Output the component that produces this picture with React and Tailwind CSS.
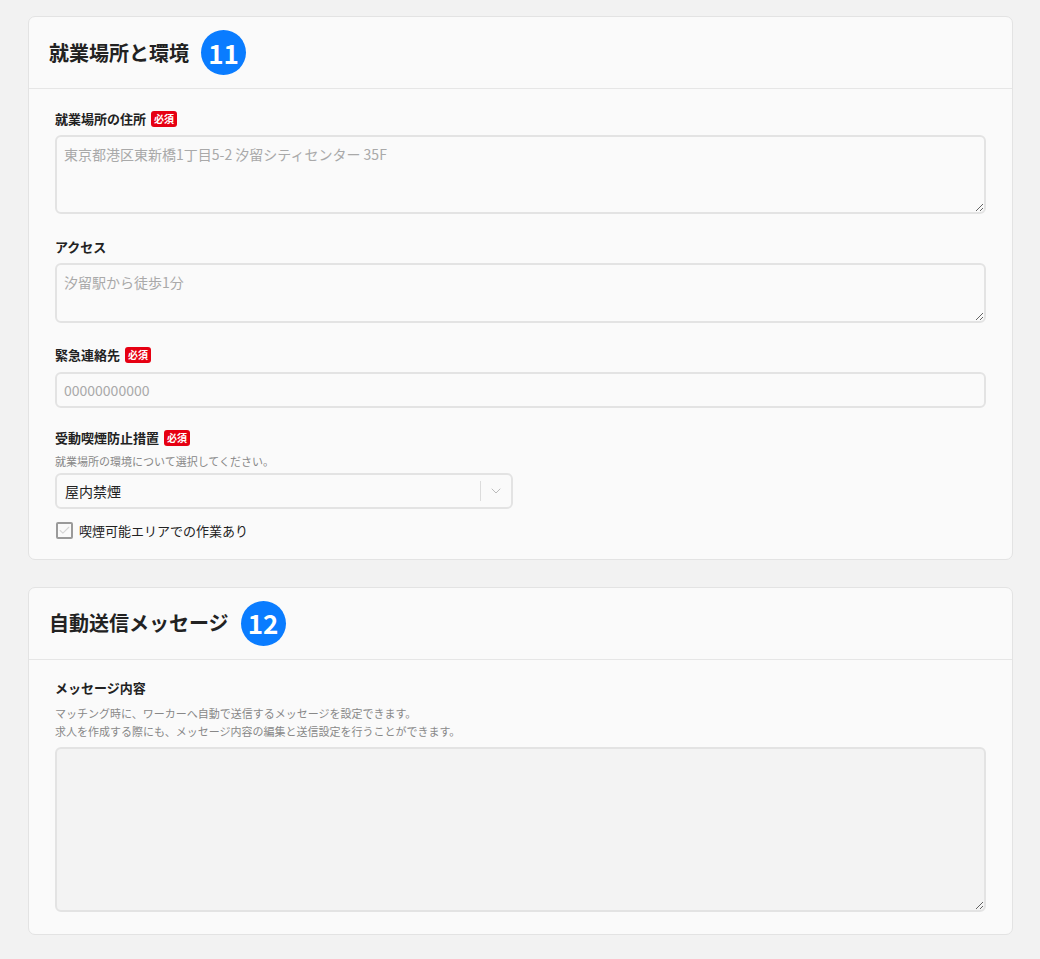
import { ChevronDown, Check } from 'lucide-react';

const font = { fontFamily: '"Noto Sans CJK JP", "Noto Sans", sans-serif' };

function Required() {
  return (
    <span className="ml-[5px] inline-flex h-[16px] items-center rounded-[3px] bg-[#e60012] px-[3px] text-[10px] font-bold leading-none text-white">
      必須
    </span>
  );
}

function Label({ children, required }) {
  return (
    <div className="flex h-[18px] items-center text-[13px] font-bold leading-[18px] text-[#222]">
      {children}
      {required && <Required />}
    </div>
  );
}

function SectionHeader({ title, num }) {
  return (
    <div className="flex h-[72px] items-center gap-[12px] border-b border-[#e6e6e6] pl-[20px]">
      <h2 className="text-[20px] font-bold text-[#222]">{title}</h2>
      <span className="flex h-[45px] w-[45px] items-center justify-center rounded-full bg-[#0a7cff] text-[26px] font-bold leading-none text-white">
        {num}
      </span>
    </div>
  );
}

export default function App() {
  return (
    <div style={font} className="min-h-[959px] bg-[#f2f2f2] px-[28px] pr-[27px] pt-[16px] pb-[26px]">
      {/* 就業場所と環境 */}
      <section className="rounded-[7px] border border-[#e3e3e3] bg-[#fafafa]">
        <SectionHeader title="就業場所と環境" num="11" />
        <div className="px-[26px] pt-[21px] pb-[18px]">
          <Label required>就業場所の住所</Label>
          <textarea
            className="mt-[7px] block h-[79px] w-full resize-y rounded-[6px] border-2 border-[#e3e3e3] bg-[#fafafa] px-[7px] py-[7px] text-[14px] leading-[20px] text-[#333] placeholder:text-[#a9a9a9] focus:outline-none"
            placeholder="東京都港区東新橋1丁目5-2 汐留シティセンター 35F"
          />

          <div className="mt-[24px]">
            <Label>アクセス</Label>
          </div>
          <textarea
            className="mt-[7px] block h-[60px] w-full resize-y rounded-[6px] border-2 border-[#e3e3e3] bg-[#fafafa] px-[7px] py-[7px] text-[14px] leading-[20px] text-[#333] placeholder:text-[#a9a9a9] focus:outline-none"
            placeholder="汐留駅から徒歩1分"
          />

          <div className="mt-[23px]">
            <Label required>緊急連絡先</Label>
          </div>
          <input
            className="mt-[8px] block h-[36px] w-full rounded-[6px] border-2 border-[#e3e3e3] bg-[#fafafa] px-[7px] text-[14px] text-[#333] placeholder:text-[#a9a9a9] focus:outline-none"
            placeholder="00000000000"
          />

          <div className="mt-[21px]">
            <Label required>受動喫煙防止措置</Label>
          </div>
          <p className="mt-[6px] text-[11px] leading-[16px] text-[#888]">就業場所の環境について選択してください。</p>
          <div className="mt-[4px] flex h-[36px] w-[458px] items-center rounded-[6px] border-2 border-[#e3e3e3] bg-[#fafafa]">
            <span className="flex-1 pl-[8px] text-[14px] text-[#222]">屋内禁煙</span>
            <span className="h-[20px] w-px bg-[#dcdcdc]" />
            <span className="flex w-[30px] items-center justify-center text-[#bbb]">
              <ChevronDown size={16} strokeWidth={1.5} />
            </span>
          </div>

          <label className="mt-[12px] flex items-center gap-[6px] pl-px">
            <span className="flex h-[17px] w-[17px] items-center justify-center rounded-[2px] border-2 border-[#9a9a9a] bg-[#fafafa] text-[#d6d6d6]">
              <Check size={13} strokeWidth={2} />
            </span>
            <span className="text-[13px] text-[#222]">喫煙可能エリアでの作業あり</span>
          </label>
        </div>
      </section>

      {/* 自動送信メッセージ */}
      <section className="mt-[27px] rounded-[7px] border border-[#e3e3e3] bg-[#fafafa]">
        <SectionHeader title="自動送信メッセージ" num="12" />
        <div className="px-[26px] pt-[19px] pb-[22px]">
          <Label>メッセージ内容</Label>
          <p className="mt-[7px] text-[11px] leading-[18px] text-[#888]">
            マッチング時に、ワーカーへ自動で送信するメッセージを設定できます。
            <br />
            求人を作成する際にも、メッセージ内容の編集と送信設定を行うことができます。
          </p>
          <textarea
            disabled
            className="mt-[7px] block h-[165px] w-full resize-y rounded-[6px] border-2 border-[#e3e3e3] bg-[#f3f3f3] px-[7px] py-[7px] text-[14px] focus:outline-none"
          />
        </div>
      </section>
    </div>
  );
}
